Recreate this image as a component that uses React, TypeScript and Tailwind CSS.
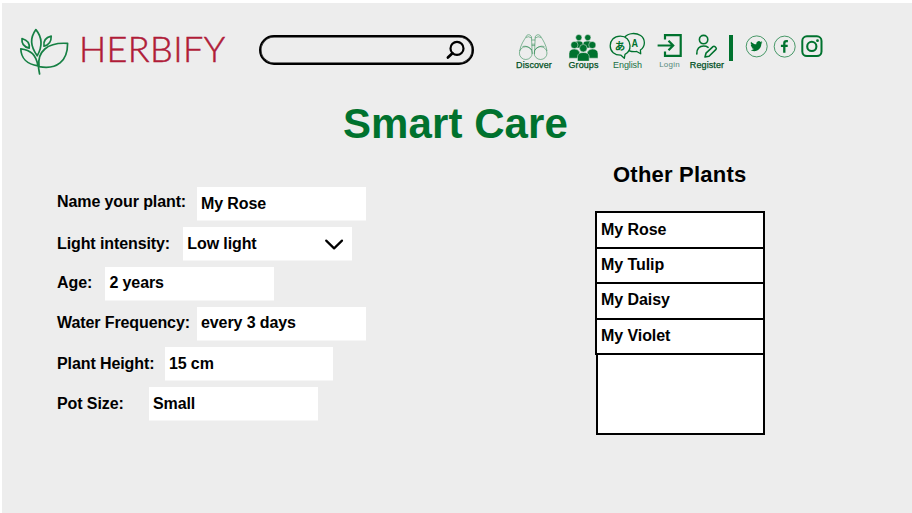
import React from "react";

const GREEN = "#00722e";

type FieldProps = {
  label: string;
  value: string;
  labelWidth: string;
  labelShift?: string;
  valueShift?: string;
  select?: boolean;
};

function Field({ label, value, labelWidth, labelShift = "", valueShift = "", select }: FieldProps) {
  return (
    <label className="flex h-[33px] items-center tracking-[-0.1px]">
      <span className={`${labelWidth} ${labelShift} shrink-0 whitespace-nowrap`}>{label}</span>
      <span className="flex h-[33px] w-[168.5px] items-center justify-between bg-white pl-1 pr-[7.5px] shadow-[0_1px_0_0_#f6f6f6]">
        <span className={`${valueShift} whitespace-nowrap`}>{value}</span>
        {select && (
          <svg width="20" height="12" viewBox="0 0 20 12" fill="none" stroke="#000" strokeWidth="2.2" strokeLinecap="round" strokeLinejoin="round">
            <path d="M2.2 2.6 L10.1 10.4 L18 2.6" />
          </svg>
        )}
      </span>
    </label>
  );
}

function Logo() {
  return (
    <svg className="shrink-0" width="50" height="50" viewBox="19 27 50 50" fill="none" stroke="#168044" strokeWidth="1.7" strokeLinejoin="round" strokeLinecap="round">
      <path d="M37.2 55.8 C30 45.5 30 38 35.9 29.6 C42.8 38 42.8 46 37.2 55.8Z" />
      <path d="M29.2 48.2 C24 47 21.4 44 22 38.5 C27 40 30 43 29.2 48.2Z" />
      <path d="M44 46.2 C43.2 41 46 37.3 51.2 36.1 C51.4 42 49 45 44 46.2Z" />
      <path d="M20.8 48.8 C31 50 36 55 38 65.8 C27 64.5 21 58 20.8 48.8Z" />
      <path d="M39 66.6 C37 52 47 42 67.6 43.4 C67.6 61 57 70 39 66.6Z" />
      <path d="M38.2 64 C38.4 68 39 71 39.6 74" />
    </svg>
  );
}

function Binoculars() {
  return (
    <svg width="36" height="28" viewBox="516 32 36 28" fill="none" stroke={GREEN} strokeWidth="0.65" strokeOpacity="0.7">
      <circle cx="525.8" cy="53.1" r="6.4" />
      <circle cx="540.6" cy="53.1" r="6.4" />
      <path d="M519.7 51 C520.5 45 524 40 526 37 C526.5 34 530.6 34 531.5 37 L532.2 54M547 51 C546.2 45 543 40 541 37 C540 34 536 34 535.2 37 L534.5 54" />
      <path d="M526 37.4 Q528.5 35.8 531.5 38M535.2 38 Q538 35.8 541 37.4M531.6 40H535.2M531.8 44.2H534.9M531.8 45.6H534.9M522.5 46.5Q527.5 45 532 50M544.4 46.5Q539 45 534.7 50" />
    </svg>
  );
}

function People() {
  return (
    <svg width="36" height="29" viewBox="565 32 36 29" fill={GREEN} stroke="#ededed" strokeWidth="0.5">
      <path d="M573.8 48 V44.5 Q574 41 578.7 41 Q583 41 583 44 Q583 41 588 41 Q592.7 41 592.8 45 V48Z" />
      <circle cx="578.8" cy="37.6" r="3.1" />
      <circle cx="587.8" cy="37.6" r="3.1" />
      <path d="M569 58.2 V53.5 Q569.2 49 574.4 49 Q579 49 580 53 V58.2Z" />
      <path d="M598 58.2 V53.5 Q597.8 49 592.4 49 Q588 49 587 53 V58.2Z" />
      <circle cx="574.4" cy="45" r="3.6" />
      <circle cx="592.3" cy="45" r="3.6" />
      <path d="M577.5 61.2 V56.5 Q577.8 52.5 583.3 52.5 Q589 52.5 589.2 56.5 V61.2Z" />
      <circle cx="583.3" cy="48.2" r="3.8" />
    </svg>
  );
}

function Language() {
  return (
    <svg width="38" height="28" viewBox="608 32 38 28" fill="none" stroke={GREEN} strokeWidth="1.3" strokeLinejoin="round">
      <path d="M624.9 37 C628 32.8 636 32.5 640.6 35.5 C645.6 39 645.7 46.5 640.4 50 L640.7 53.8 L636.7 51.5 C634 52 631 51.5 628.8 50.6" />
      <path d="M620.3 36.2 C613.8 36.2 610.2 40.3 610.2 45.8 C610.2 51.7 614.6 55.4 621 55.2 L624.3 58.3 L625 54.4 C629.2 52.3 630.2 49.2 630 45.5 C629.7 40 626 36.2 620.3 36.2Z" />
      <text x="614.7" y="50" fill={GREEN} stroke="none" fontFamily="Noto Sans CJK JP, sans-serif" fontWeight="700" fontSize="10.5">あ</text>
      <text x="631.6" y="46.6" fill={GREEN} stroke="none" fontFamily="Liberation Sans, sans-serif" fontSize="10.5" fontWeight="700" textLength="6.5" lengthAdjust="spacingAndGlyphs">A</text>
    </svg>
  );
}

function LoginIcon() {
  return (
    <svg width="30" height="28" viewBox="655 32 30 28" fill="none" stroke={GREEN} strokeWidth="2.2">
      <path d="M665 39.5 V35.2 H680.7 V55.8 H665 V51.5" />
      <path d="M657.6 45.5 H672.8 M668.5 40.8 L673.2 45.5 L668.5 50.2" />
    </svg>
  );
}

function RegisterIcon() {
  return (
    <svg width="28" height="28" viewBox="693 32 28 28" fill="none" stroke={GREEN} strokeWidth="1.6" strokeLinejoin="round" strokeLinecap="round">
      <circle cx="703.6" cy="39.6" r="4.2" />
      <path d="M696.8 54 C696.4 48.5 699.6 46 703.6 46 C705.6 46 707 46.5 708.1 47.3" />
      <path d="M705 57 L706 53.2 L713 46.6 C714.3 45.4 717.2 48 716 49.4 L709 56.2Z" />
    </svg>
  );
}

function Social() {
  return (
    <div className="mt-[3px] flex gap-[5px]">
      <svg width="23" height="23" viewBox="0 0 23 23">
        <circle cx="11.7" cy="11.4" r="10.5" fill="none" stroke={GREEN} strokeWidth="0.7" />
        <svg x="5.2" y="5" width="12.4" height="12.4" viewBox="0 0 24 24">
          <path fill={GREEN} d="M23.95 4.57a10 10 0 0 1-2.82.77 4.96 4.96 0 0 0 2.16-2.72c-.95.55-2 .96-3.13 1.18a4.92 4.92 0 0 0-8.38 4.48C7.69 8.1 4.07 6.13 1.64 3.16a4.82 4.82 0 0 0-.67 2.48c0 1.71.87 3.21 2.19 4.1a4.9 4.9 0 0 1-2.23-.62v.06a4.92 4.92 0 0 0 3.95 4.83 5 5 0 0 1-2.21.08 4.94 4.94 0 0 0 4.6 3.42A9.87 9.87 0 0 1 0 19.54a13.99 13.99 0 0 0 7.56 2.21c9.05 0 13.99-7.5 13.99-13.98 0-.21 0-.42-.02-.63a9.94 9.94 0 0 0 2.42-2.57Z" />
        </svg>
      </svg>
      <svg width="23" height="23" viewBox="0 0 23 23">
        <circle cx="11.7" cy="11.6" r="10.5" fill="none" stroke={GREEN} strokeWidth="0.7" />
        <path d="M14.9 6.2 H13.4 Q11.3 6.2 11.3 8.3 V17.8 M7.9 10.8 H14.7" fill="none" stroke={GREEN} strokeWidth="2.3" />
      </svg>
      <svg width="23" height="23" viewBox="0.2 0 23 23" fill="none" stroke={GREEN}>
        <rect x="1.5" y="1.3" width="19.2" height="19.8" rx="4.6" strokeWidth="2" />
        <circle cx="11" cy="11.4" r="4.6" strokeWidth="2.1" />
        <circle cx="16.7" cy="5.7" r="1.4" fill={GREEN} stroke="none" />
      </svg>
    </div>
  );
}

function NavItem({ label, width, labelClass, shift = "", children }: { label: string; width: string; labelClass: string; shift?: string; children: React.ReactNode }) {
  return (
    <a className={`flex ${width} shrink-0 flex-col items-center`}>
      <span className={`flex h-[28px] items-start justify-center ${shift}`}>{children}</span>
      <span className={`whitespace-nowrap leading-[10px] ${labelClass}`}>{label}</span>
    </a>
  );
}

function Header() {
  return (
    <header className="flex h-[50px] items-start">
      <Logo />
      <div className="ml-[10px] mt-[-1px] w-[180px] whitespace-nowrap font-['Lato'] text-[36px] font-light leading-[44px] tracking-[0.4px] text-[#b01c38] [-webkit-text-stroke:0.5px_#b01c38]">HERBIFY</div>
      <div className="mt-[8px] flex h-[30px] w-[215px] shrink-0 items-center justify-end rounded-full border-2 border-black pr-[7px] shadow-[inset_0_0_0_0.5px_#000]">
        <svg width="20" height="20" viewBox="0 0 20 20" fill="none" stroke="#000" strokeWidth="2.2" strokeLinecap="round">
          <circle cx="12" cy="8.4" r="6.5" />
          <path d="M7.4 13.2 L2.9 17.5" strokeWidth="2.7" />
        </svg>
      </div>
      <nav className="ml-[34px] mt-[5px] flex shrink-0">
        <NavItem label="Discover" width="w-[52px]" labelClass="text-[9px] text-[#00501f] tracking-[0.1px] [-webkit-text-stroke:0.25px_#00501f]"><Binoculars /></NavItem>
        <NavItem label="Groups" width="w-[47px]" shift="-ml-[2px]" labelClass="text-[9px] text-[#00501f] tracking-[0.1px] [-webkit-text-stroke:0.25px_#00501f]"><People /></NavItem>
        <NavItem label="English" width="w-[41px]" shift="-ml-[2px]" labelClass="text-[9px] text-[#207044] tracking-[-0.1px]"><Language /></NavItem>
        <NavItem label="Login" width="w-[43px]" labelClass="text-[8px] text-[#568b7c] tracking-[0.2px]"><LoginIcon /></NavItem>
        <NavItem label="Register" width="w-[32px]" labelClass="text-[9px] text-[#00501f] tracking-[0.1px] [-webkit-text-stroke:0.25px_#00501f]"><RegisterIcon /></NavItem>
        <div className="ml-[6px] mt-[3px] h-[26px] w-[4px] bg-[#00722e]" />
        <div className="ml-[12px]"><Social /></div>
      </nav>
    </header>
  );
}

const plants = [
  { name: "My Rose", row: "h-[36px]" },
  { name: "My Tulip", row: "h-[35px] pb-[1px]" },
  { name: "My Daisy", row: "h-[36px] pb-[2px]" },
  { name: "My Violet", row: "h-[35px] pb-[1px]" },
];

export default function App() {
  return (
    <div className="h-[513px] w-[912px] overflow-hidden bg-white pl-[2px] pt-[3px] font-['Liberation_Sans',Arial,sans-serif] text-black">
      <div className="h-[510px] bg-[#ededed] pl-[17px] pt-[24px]">
        <Header />
        <h1 className="ml-[324px] mt-[22px] h-[49px] whitespace-nowrap text-[42px] font-bold leading-[49px] tracking-[0.08px] text-[#00722e]">Smart Care</h1>
        <main className="flex items-start text-[16px] font-bold leading-[20px]">
          <form className="ml-[38px] mt-[39px] flex w-[538px] flex-col gap-[7px]">
            <Field label="Name your plant:" value="My Rose" labelWidth="w-[140px]" labelShift="-mt-[4px]" />
            <Field label="Light intensity:" value="Low light" labelWidth="w-[126.3px]" select />
            <Field label="Age:" value="2 years" labelWidth="w-[48.4px]" labelShift="-mt-[2px]" valueShift="-mt-[2px]" />
            <Field label="Water Frequency:" value="every 3 days" labelWidth="w-[140px]" labelShift="-mt-[2px]" valueShift="-mt-[2px]" />
            <Field label="Plant Height:" value="15 cm" labelWidth="w-[107.9px]" />
            <Field label="Pot Size:" value="Small" labelWidth="w-[92px]" />
          </form>
          <section className="mt-[14px] w-[170px]">
            <h2 className="ml-[18px] whitespace-nowrap text-[22px] leading-[26px] tracking-[0.22px]">Other Plants</h2>
            <ul className="mt-[23px] border-t-2 border-black tracking-[-0.07px]">
              {plants.map((plant) => (
                <li key={plant.name} className={`flex ${plant.row} items-center border-x-2 border-b-2 border-black bg-white pl-1`}>{plant.name}</li>
              ))}
            </ul>
            <div className="ml-[1px] h-[80px] border-x-2 border-b-2 border-black bg-white" />
          </section>
        </main>
      </div>
    </div>
  );
}
